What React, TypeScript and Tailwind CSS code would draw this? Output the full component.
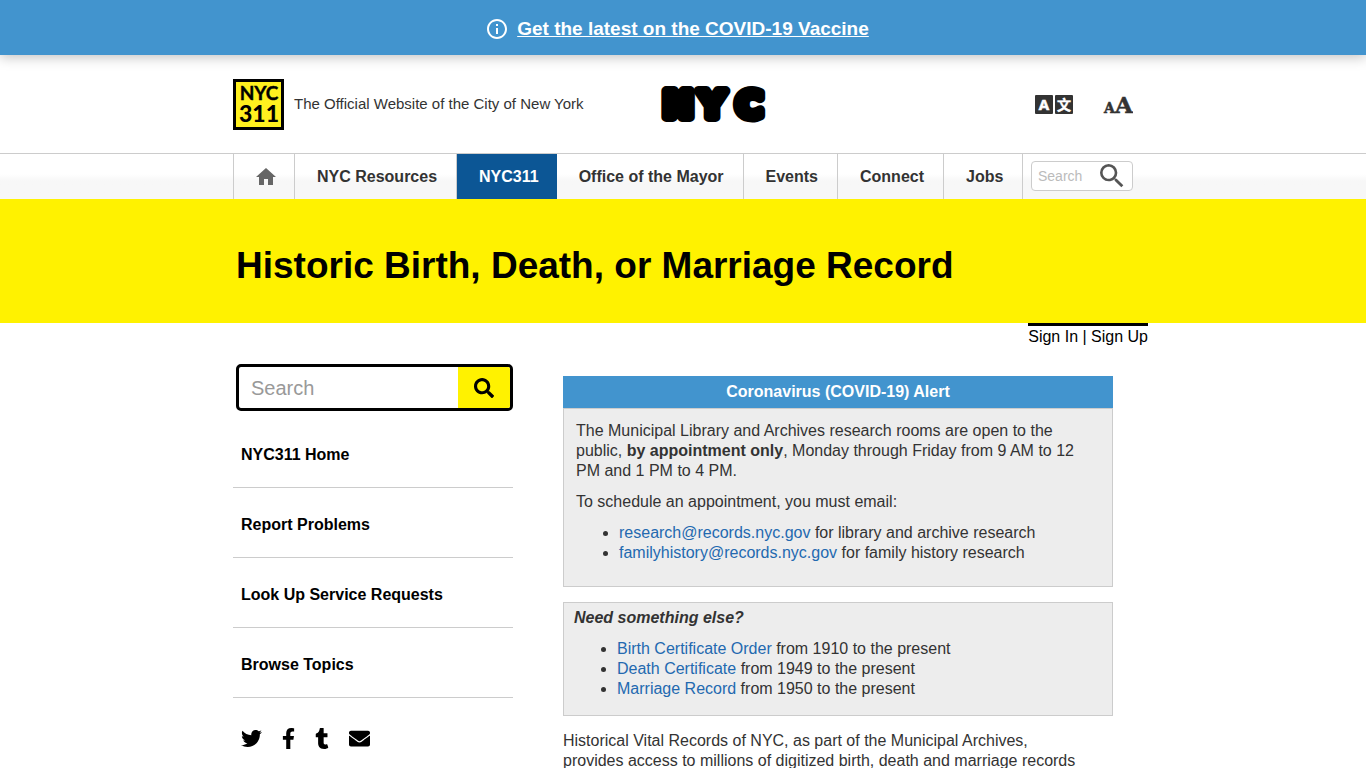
import React from 'react';
import { FaSearch, FaTwitter, FaFacebookF, FaTumblr, FaEnvelope } from 'react-icons/fa';
import { MdHome, MdSearch, MdInfoOutline } from 'react-icons/md';

const navItems = [
  { name: 'NYC Resources', active: false },
  { name: 'NYC311', active: true },
  { name: 'Office of the Mayor', active: false },
  { name: 'Events', active: false },
  { name: 'Connect', active: false },
  { name: 'Jobs', active: false },
];

const sideItems = ['NYC311 Home', 'Report Problems', 'Look Up Service Requests', 'Browse Topics'];

const otherRecords = [
  { name: 'Birth Certificate Order', years: 'from 1910 to the present' },
  { name: 'Death Certificate', years: 'from 1949 to the present' },
  { name: 'Marriage Record', years: 'from 1950 to the present' },
];

const NycLogo: React.FC = () => (
  <svg
    width="108"
    height="50"
    viewBox="0 0 108 50"
    role="img"
    aria-label="NYC"
    fontFamily="DejaVu Sans, sans-serif"
    fontWeight="700"
    fontSize="36"
    stroke="#000"
    strokeWidth="10"
    strokeLinejoin="round"
    fill="#000"
  >
    <text x="3" y="38">N</text>
    <text x="39" y="38">Y</text>
    <text x="76" y="38">C</text>
  </svg>
);

const Nyc311Logo: React.FC = () => (
  <svg width="51" height="51" viewBox="0 0 51 51" role="img" aria-label="NYC 311" fontFamily="Lato, sans-serif" textAnchor="middle">
    <rect x="1.5" y="1.5" width="48" height="48" fill="#fff01f" stroke="#000" strokeWidth="3" />
    <text x="26" y="21" fontSize="19" fontWeight="700" stroke="#000" strokeWidth="0.4">NYC</text>
    <text x="26" y="43" fontSize="23" fontWeight="900">311</text>
  </svg>
);

const TranslateIcon: React.FC = () => (
  <svg width="38" height="25" viewBox="0 -3 38 25" aria-hidden="true" textAnchor="middle" fontWeight="700" fill="#fff">
    <rect width="18" height="19" rx="1" fill="#333" />
    <rect x="20" width="18" height="19" rx="1" fill="#333" />
    <text x="9" y="15" fontSize="15" fontFamily="Open Sans, sans-serif" stroke="#fff" strokeWidth="0.6">A</text>
    <text x="29" y="15" fontSize="14" fontFamily="Noto Sans CJK SC, sans-serif" stroke="#fff" strokeWidth="0.4">文</text>
  </svg>
);

const TextSizeIcon: React.FC = () => (
  <svg
    width="30"
    height="27"
    viewBox="0 -4 30 27"
    aria-hidden="true"
    fontFamily="DejaVu Serif, serif"
    fontWeight="700"
    fill="#333"
    stroke="#333"
    strokeWidth="0.5"
  >
    <text x="1" y="18" fontSize="14">A</text>
    <text x="12" y="18" fontSize="23">A</text>
  </svg>
);

const App: React.FC = () => {
  return (
    <div className="bg-white font-['Liberation_Sans',Arial,sans-serif] text-base text-[#333]">
      <div className="relative flex h-[55px] items-center justify-center gap-2 bg-[#4294ce] pt-[2px] pr-3 text-white shadow-[0_2px_12px_rgba(0,0,0,0.25)]">
        <MdInfoOutline className="size-6" />
        <a href="#" className="text-[19px] leading-7 font-bold underline">
          Get the latest on the COVID-19 Vaccine
        </a>
      </div>

      <header className="mx-auto flex h-[98px] max-w-[900px] items-center">
        <Nyc311Logo />
        <span className="ml-[10px] w-[366px] text-[15px]">The Official Website of the City of New York</span>
        <NycLogo />
        <div className="ml-auto flex items-center gap-[30px]">
          <button aria-label="Translate">
            <TranslateIcon />
          </button>
          <button aria-label="Text size">
            <TextSizeIcon />
          </button>
        </div>
      </header>

      <nav className="border-t border-[#ccc] bg-linear-to-b from-white from-45% via-[#f7f7f7] via-60% to-[#f7f7f7]">
        <div className="mx-auto flex h-[45px] max-w-[900px] items-stretch">
          <a
            href="#"
            aria-label="Home"
            className="flex w-[62px] items-center justify-center border-x border-[#ccc] pl-1 text-[#666]"
          >
            <MdHome className="size-6" />
          </a>
          {navItems.map((item) => (
            <a
              key={item.name}
              href="#"
              className={
                item.active
                  ? 'flex items-center bg-[#0c5695] pr-[18px] pl-[22px] font-bold text-white'
                  : 'flex items-center border-r border-[#ccc] pr-[19px] pl-[22px] font-bold'
              }
            >
              {item.name}
            </a>
          ))}
          <form className="mt-[7px] ml-auto flex h-[30px] w-[102px] items-center rounded border border-[#ccc] bg-white">
            <input
              type="text"
              aria-label="Search"
              placeholder="Search"
              className="w-16 pl-[6px] text-sm outline-none placeholder:text-[#bbb]"
            />
            <button type="button" aria-label="Submit search" className="text-[#555]">
              <MdSearch className="size-8" />
            </button>
          </form>
        </div>
      </nav>

      <div className="bg-[#fff200]">
        <div className="mx-auto flex h-[124px] max-w-[900px] items-center pt-[10px] pl-[3px]">
          <h1 className="text-[37px] font-bold text-black">Historic Birth, Death, or Marriage Record</h1>
        </div>
      </div>

      <div className="mx-auto flex max-w-[930px] justify-end">
        <div className="border-t-[3px] border-black leading-[22px] text-black">
          <a href="#">Sign In</a> | <a href="#">Sign Up</a>
        </div>
      </div>

      <div className="mx-auto grid max-w-[900px] grid-cols-[280px_1fr] gap-[50px] pt-4">
        <aside>
          <form className="ml-[3px] flex h-[47px] overflow-hidden rounded-[5px] border-[3px] border-black">
            <input
              type="text"
              aria-label="Search NYC311"
              placeholder="Search"
              className="min-w-0 flex-1 pl-3 text-xl outline-none placeholder:text-[#999]"
            />
            <button type="button" aria-label="Search" className="flex w-[52px] items-center justify-center bg-[#fff200] text-black">
              <FaSearch className="size-5" />
            </button>
          </form>
          <ul className="mt-[7px]">
            {sideItems.map((item) => (
              <li key={item} className="border-b border-[#ccc] pt-[25px] pb-5 pl-2">
                <a href="#" className="font-bold text-black">
                  {item}
                </a>
              </li>
            ))}
          </ul>
          <div className="mt-[30px] flex items-center gap-4 pl-2 text-black">
            <a href="#" aria-label="Twitter">
              <FaTwitter className="size-[21px]" />
            </a>
            <a href="#" aria-label="Facebook">
              <FaFacebookF className="size-[21px]" />
            </a>
            <a href="#" aria-label="Tumblr">
              <FaTumblr className="h-[21px] w-[14px]" />
            </a>
            <a href="#" aria-label="Email" className="pl-1">
              <FaEnvelope className="size-[21px]" />
            </a>
          </div>
        </aside>

        <main className="pt-3 pr-5 leading-5">
          <h2 className="bg-[#4294ce] py-[6px] text-center font-bold text-white">Coronavirus (COVID-19) Alert</h2>
          <section className="border border-[#ccc] bg-[#ededed] px-3 pt-3 pb-[23px]">
            <p>
              The Municipal Library and Archives research rooms are open to the public,{' '}
              <strong>by appointment only</strong>, Monday through Friday from 9 AM to 12 PM and 1 PM to 4 PM.
            </p>
            <p className="mt-[11px]">To schedule an appointment, you must email:</p>
            <ul className="mt-[11px] list-disc pl-[43px]">
              <li>
                <a href="#" className="text-[#2369b0]">
                  research@records.nyc.gov
                </a>{' '}
                for library and archive research
              </li>
              <li>
                <a href="#" className="text-[#2369b0]">
                  familyhistory@records.nyc.gov
                </a>{' '}
                for family history research
              </li>
            </ul>
          </section>

          <section className="mt-[15px] border border-[#ccc] bg-[#ededed] px-[10px] pt-[5px] pb-4">
            <p className="font-bold italic">Need something else?</p>
            <ul className="mt-[11px] list-disc pl-[43px]">
              {otherRecords.map((record) => (
                <li key={record.name}>
                  <a href="#" className="text-[#2369b0]">
                    {record.name}
                  </a>{' '}
                  {record.years}
                </li>
              ))}
            </ul>
          </section>

          <p className="mt-[15px]">
            Historical Vital Records of NYC, as part of the Municipal Archives,
            <br />
            provides access to millions of digitized birth, death and marriage records
          </p>
        </main>
      </div>
    </div>
  );
};

export default App;
